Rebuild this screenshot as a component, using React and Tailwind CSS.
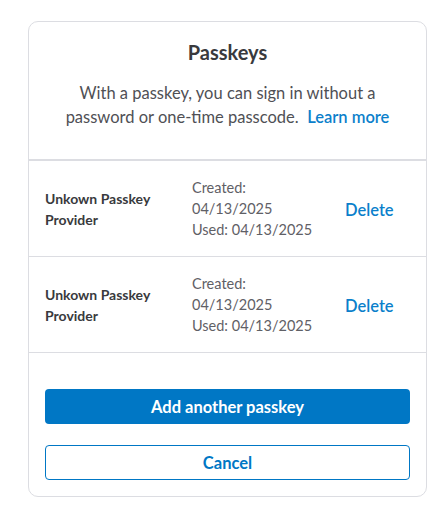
const passkeys = [
    { id: 1, name: 'Unkown Passkey Provider', created: '04/13/2025', used: '04/13/2025' },
    { id: 2, name: 'Unkown Passkey Provider', created: '04/13/2025', used: '04/13/2025' },
]

function PasskeyRow({ item }) {
    return (
        <div className="flex items-center border-b border-[#dcdde2] h-[96px] px-4">
            <div className="w-[147px] text-[14px] leading-[21px] font-bold text-[#393a3d] pr-4">
                {item.name}
            </div>
            <div className="w-[153px] text-[14.5px] leading-[21px] text-[#5f6066]">
                <div>Created:</div>
                <div>{item.created}</div>
                <div>Used: {item.used}</div>
            </div>
            <button className="pt-[3px] text-[16.5px] font-semibold text-[#0b7fcb]">Delete</button>
        </div>
    )
}

export default function App() {
    return (
        <div className="min-h-screen bg-white pt-[21px] pl-[28px]" style={{ fontFamily: 'Lato, "Open Sans", sans-serif' }}>
            <div className="w-[399px] rounded-[10px] border border-[#dcdde2] bg-white">
                <div className="border-b-2 border-[#dcdde2] px-[32px] pt-[17px] pb-[30px] text-center">
                    <h1 className="text-[20px] font-bold leading-[26px] text-[#393a3d]">Passkeys</h1>
                    <p className="mt-[16px] text-[16.5px] leading-[24px] text-[#4f5055]">
                        With a passkey, you can sign in without a password or one-time passcode.{'\u00a0 '}
                        <span className="font-semibold text-[#0b7fcb]">Learn more</span>
                    </p>
                </div>
                {passkeys.map(item => (
                    <PasskeyRow key={item.id} item={item} />
                ))}
                <div className="flex flex-col gap-[21px] px-4 pt-[36px] pb-[16px]">
                    <button className="h-[35px] rounded-[4px] bg-[#0077c5] pt-[2px] text-[16.5px] font-bold text-white">
                        Add another passkey
                    </button>
                    <button className="h-[35px] rounded-[4px] border-[1.5px] border-[#0077c5] pt-[2px] text-[16.5px] font-bold text-[#0077c5]">
                        Cancel
                    </button>
                </div>
            </div>
        </div>
    )
}
